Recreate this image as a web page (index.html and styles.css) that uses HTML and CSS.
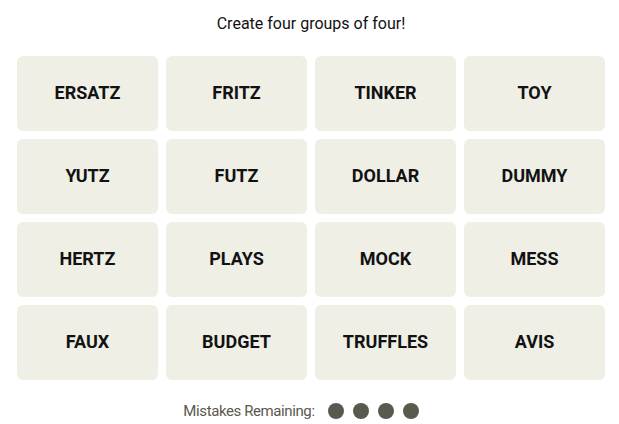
FILE: index.html
```html
<!DOCTYPE html>
<html>
<head>
<meta charset="utf-8">
<link rel="stylesheet" href="styles.css">
</head>
<body>
<main class="game">
  <p class="prompt">Create four groups of four!</p>
  <div class="board">
    <button class="tile">ERSATZ</button>
    <button class="tile">FRITZ</button>
    <button class="tile">TINKER</button>
    <button class="tile">TOY</button>
    <button class="tile">YUTZ</button>
    <button class="tile">FUTZ</button>
    <button class="tile">DOLLAR</button>
    <button class="tile">DUMMY</button>
    <button class="tile">HERTZ</button>
    <button class="tile">PLAYS</button>
    <button class="tile">MOCK</button>
    <button class="tile">MESS</button>
    <button class="tile">FAUX</button>
    <button class="tile">BUDGET</button>
    <button class="tile">TRUFFLES</button>
    <button class="tile">AVIS</button>
  </div>
  <div class="mistakes">
    <span class="mistakes-label">Mistakes Remaining:</span>
    <span class="dots">
      <span class="dot"></span><span class="dot"></span><span class="dot"></span><span class="dot"></span>
    </span>
  </div>
</main>
</body>
</html>
```
FILE: styles.css
```css
html, body {
  margin: 0;
  padding: 0;
  background: #ffffff;
}
.game {
  width: 588px;
  padding: 0 0 0 17px;
  display: flex;
  flex-direction: column;
  align-items: center;
  font-family: Roboto, "Liberation Sans", sans-serif;
}
.prompt {
  margin: 14px 0 0 0;
  height: 20px;
  line-height: 20px;
  font-size: 16px;
  color: #121212;
}
.board {
  margin-top: 22px;
  display: grid;
  grid-template-columns: repeat(4, 141px);
  grid-auto-rows: 75px;
  gap: 8px;
}
.tile {
  border: none;
  border-radius: 6px;
  background: #efefe6;
  font-family: Roboto, "Liberation Sans", sans-serif;
  font-weight: 700;
  font-size: 18px;
  color: #121212;
  padding: 0 0 3px 0;
  display: flex;
  align-items: center;
  justify-content: center;
}
.mistakes {
  margin-top: 22px;
  margin-right: 20px;
  display: flex;
  align-items: center;
  gap: 13px;
  height: 18px;
}
.mistakes-label {
  font-size: 15px;
  letter-spacing: -0.4px;
  color: #5a594e;
}
.dots {
  display: flex;
  gap: 9px;
}
.dot {
  width: 16px;
  height: 16px;
  border-radius: 50%;
  background: #5a594e;
}
```
